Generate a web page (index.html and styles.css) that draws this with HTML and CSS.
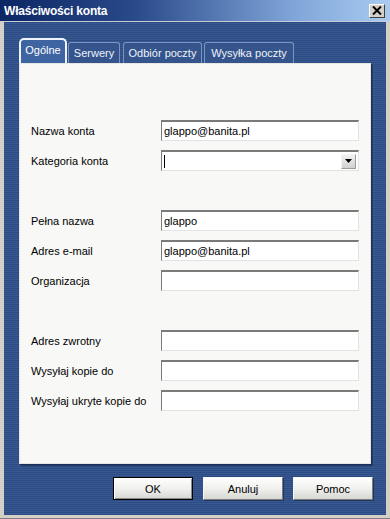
FILE: index.html
```html
<!DOCTYPE html>
<html lang="pl">
<head>
<meta charset="utf-8">
<title>Właściwości konta</title>
<link rel="stylesheet" href="styles.css">
</head>
<body>
<div class="window">
  <div class="titlebar">
    <span class="title">Właściwości konta</span>
    <span class="close" aria-label="Zamknij">
      <svg width="10" height="9" viewBox="0 0 10 9"><path d="M1 0.5 L9 8.5 M9 0.5 L1 8.5" stroke="#000" stroke-width="2" fill="none"/></svg>
    </span>
  </div>
  <div class="body">
    <div class="tabs">
      <div class="tab active t1">Ogólne</div>
      <div class="tab t2">Serwery</div>
      <div class="tab t3">Odbiór poczty</div>
      <div class="tab t4">Wysyłka poczty</div>
    </div>
    <div class="panel">
      <div class="group">
        <div class="row"><span class="label">Nazwa konta</span><span class="field">glappo@banita.pl</span></div>
        <div class="row"><span class="label">Kategoria konta</span><span class="field combo"><span class="caret"></span><span class="drop"><svg width="7" height="4" viewBox="0 0 7 4"><path d="M0 0 H7 L3.5 4 Z" fill="#000"/></svg></span></span></div>
      </div>
      <div class="group">
        <div class="row"><span class="label">Pełna nazwa</span><span class="field">glappo</span></div>
        <div class="row"><span class="label">Adres e-mail</span><span class="field">glappo@banita.pl</span></div>
        <div class="row"><span class="label">Organizacja</span><span class="field"></span></div>
      </div>
      <div class="group">
        <div class="row"><span class="label">Adres zwrotny</span><span class="field"></span></div>
        <div class="row"><span class="label">Wysyłaj kopie do</span><span class="field"></span></div>
        <div class="row"><span class="label">Wysyłaj ukryte kopie do</span><span class="field"></span></div>
      </div>
    </div>
    <div class="buttons">
      <span class="btn default">OK</span>
      <span class="btn">Anuluj</span>
      <span class="btn">Pomoc</span>
    </div>
  </div>
</div>
</body>
</html>
```
FILE: styles.css
```css
html, body {
  margin: 0;
  padding: 0;
  width: 390px;
  height: 519px;
  overflow: hidden;
  font-family: "Liberation Sans", Arial, sans-serif;
  font-size: 11px;
}
.window {
  width: 390px;
  height: 519px;
  box-sizing: border-box;
  display: flex;
  flex-direction: column;
  background: #d4d0c8;
  border-bottom: 1px solid #808080;
}
.titlebar {
  height: 21px;
  flex: none;
  display: flex;
  align-items: center;
  justify-content: space-between;
  padding: 0 5px 0 4px;
  background: linear-gradient(to right, #0c2664 0%, #2a4a8a 35%, #7fa5d8 75%, #a9cbf0 100%);
  border-bottom: 1px solid #c8ccd6;
}
.title {
  color: #fff;
  font-weight: bold;
  font-size: 12px;
  letter-spacing: -0.2px;
}
.close {
  width: 16px;
  height: 14px;
  box-sizing: border-box;
  display: flex;
  align-items: center;
  justify-content: center;
  background: #d4d0c8;
  border: 1px solid;
  border-color: #fff #404040 #404040 #fff;
}
.body {
  flex: 1;
  margin: 0 4px 3px 4px;
  padding: 16px 14px 0 15px;
  display: flex;
  flex-direction: column;
  background: repeating-linear-gradient(to bottom, #2c4a84 0px, #2c4a84 1px, #395a91 1px, #395a91 2px);
}
.tabs {
  display: flex;
  align-items: flex-end;
  height: 25px;
}
.tab {
  height: 21px;
  box-sizing: border-box;
  display: flex;
  align-items: center;
  justify-content: center;
  color: #eef2fa;
  font-size: 11px;
  border: 1px solid #7b93bd;
  border-bottom: none;
  border-radius: 3px 3px 0 0;
  background: #35548c;
}
.t1 { width: 48px; }
.t2 { width: 52px; margin-left: 1px; }
.t3 { width: 79px; margin-left: 3px; }
.t4 { width: 90px; margin-left: 2px; }
.tab.active {
  height: 25px;
  padding-bottom: 4px;
  border: 2px solid #eef3fb;
  border-bottom: none;
  border-radius: 5px 5px 0 0;
  background: #3f64a2;
  color: #fff;
}
.panel {
  width: 352px;
  height: 401px;
  box-sizing: border-box;
  padding: 56px 11px 0 11px;
  background: #f8f8f6;
  border: 1px solid #e6e6e2;
  box-shadow: 1px 1px 0 #1b2e56, 2px 2px 0 #243c6a;
  display: flex;
  flex-direction: column;
  gap: 39px;
}
.group {
  display: flex;
  flex-direction: column;
  gap: 9px;
}
.row {
  display: flex;
  align-items: center;
  height: 21px;
}
.label {
  width: 130px;
  flex: none;
  color: #000;
}
.field {
  width: 200px;
  height: 21px;
  box-sizing: border-box;
  background: #fff;
  border: 1px solid;
  border-color: #7a7a7a #e2e2e2 #e2e2e2 #7a7a7a;
  border-top-width: 2px;
  padding: 0 2px;
  display: flex;
  align-items: center;
  color: #000;
  font-size: 11px;
}
.combo {
  justify-content: space-between;
  padding-right: 2px;
}
.caret {
  width: 1px;
  height: 13px;
  background: #000;
}
.drop {
  width: 15px;
  height: 15px;
  box-sizing: border-box;
  display: flex;
  align-items: center;
  justify-content: center;
  background: linear-gradient(to bottom, #f2f2f2, #d0d0d0);
  border: 1px solid;
  border-color: #f4f4f4 #9a9a9a #9a9a9a #f4f4f4;
}
.buttons {
  display: flex;
  justify-content: flex-end;
  gap: 10px;
  margin-top: 13px;
  margin-right: -1px;
}
.btn {
  width: 80px;
  height: 23px;
  box-sizing: border-box;
  display: flex;
  align-items: center;
  justify-content: center;
  color: #000;
  font-size: 11px;
  background: linear-gradient(to bottom, #ffffff 0%, #f0f0ee 50%, #d6d6d2 100%);
  border: 1px solid;
  border-color: #f6f6f6 #7c7c7c #7c7c7c #f6f6f6;
  box-shadow: 1px 1px 0 #203560;
}
.btn.default {
  border: 1px solid #000;
  box-shadow: inset 1px 1px 0 #fff, inset -1px -1px 0 #8a8a8a;
}
```
